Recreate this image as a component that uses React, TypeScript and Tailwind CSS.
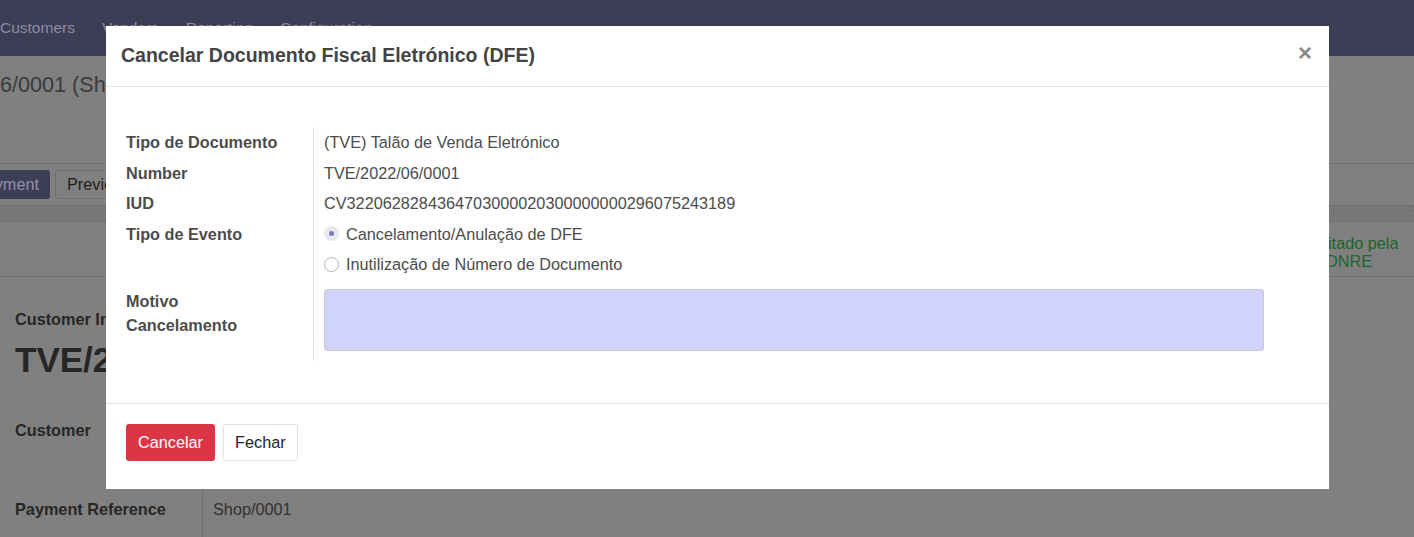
import { useState } from 'react'

const rows = [
  { label: 'Tipo de Documento', value: '(TVE) Talão de Venda Eletrónico' },
  { label: 'Number', value: 'TVE/2022/06/0001' },
  { label: 'IUD', value: 'CV3220628284364703000020300000000296075243189' },
]

const events = ['Cancelamento/Anulação de DFE', 'Inutilização de Número de Documento']

function Radio({ checked, label, onClick }: { checked: boolean; label: string; onClick: () => void }) {
  return (
    <label className="flex cursor-pointer items-center gap-[7px]" onClick={onClick}>
      {checked ? (
        <span className="flex h-[15px] w-[15px] items-center justify-center rounded-full bg-[#e8e8f0]">
          <span className="h-[5px] w-[5px] rounded-full bg-[#7c7bad]" />
        </span>
      ) : (
        <span className="h-[15px] w-[15px] rounded-full border border-[#adb5bd] bg-white" />
      )}
      <span>{label}</span>
    </label>
  )
}

function Backdrop() {
  return (
    <div className="flex flex-col">
      <nav className="flex h-[56px] items-center gap-[27px] bg-[#3e3d56] text-[15.5px] text-[#8d8ca1]">
        <span>Customers</span>
        <span>Vendors</span>
        <span>Reporting</span>
        <span>Configuration</span>
      </nav>
      <div className="h-[108px] border-b border-[#6e6e6e]">
        <div className="mt-[14px] text-[21.6px] leading-[30px] text-[#3a3a3a]">6/0001 (Shop/0001)</div>
      </div>
      <div className="flex h-[41px] gap-[5px] pt-[6px]">
        <span className="flex h-[29px] w-[50px] items-center justify-end rounded-r-[3px] bg-[#3e3d56] pr-[11px] text-[#9190a8]">yment</span>
        <span className="flex h-[29px] items-center rounded-[3px] border border-[#6e6e6e] px-[11px] text-[#1e1e1e]">Preview</span>
      </div>
      <div className="h-[17px] border-y border-[#6e6e6e] bg-[repeating-conic-gradient(#7a7a7a_0%_25%,#747474_0%_50%)] bg-[length:4px_4px]" />
      <div className="flex h-[55px] justify-end border-b border-[#6e6e6e]">
        <div className="mt-[12px] w-[114px] leading-[18px] text-[#1d6629]">
          <div>Aceitado pela</div>
          <div className="pl-[26px]">DNRE</div>
        </div>
      </div>
      <div className="flex flex-col pl-[15px] text-[#262626]">
        <div className="mt-[30px] font-bold leading-[24px]">Customer Invoice</div>
        <div className="mt-[9px] text-[35px] font-bold leading-[40px]">TVE/2022/06/0001</div>
        <div className="mt-[38px] font-bold leading-[24px]">Customer</div>
        <div className="mt-[48px] flex h-[60px]">
          <div className="w-[187px] pt-[7px] font-bold leading-[24px]">Payment Reference</div>
          <div className="border-l border-[#6e6e6e] pl-[10px] pt-[7px] leading-[24px] text-[#303030]">Shop/0001</div>
        </div>
      </div>
    </div>
  )
}

export default function App() {
  const [event, setEvent] = useState(0)
  const [reason, setReason] = useState('')

  return (
    <div className="relative h-[537px] w-[1414px] overflow-hidden bg-[#808080] font-['Liberation_Sans',Arial,sans-serif] text-[16.25px]">
      <Backdrop />

      <div className="absolute left-[106px] top-[26px] flex h-[463px] w-[1223px] flex-col bg-white text-[#4c4c4c]">
        <div className="flex h-[61px] shrink-0 items-center justify-between border-b border-[#dee2e6] pl-[15px] pr-[17px]">
          <h4 className="text-[19.5px] font-bold text-[#444]">Cancelar Documento Fiscal Eletrónico (DFE)</h4>
          <button className="mb-[6px] text-[24px] font-bold leading-none text-[#8a8a8a]">×</button>
        </div>

        <div className="flex flex-col px-[20px] pb-[42px] pt-[40px]">
          {rows.map((r) => (
            <div key={r.label} className="flex h-[30.5px]">
              <div className="flex w-[187px] items-center font-bold">{r.label}</div>
              <div className="flex items-center border-l border-[#dee2e6] pl-[10px]">{r.value}</div>
            </div>
          ))}
          <div className="flex">
            <div className="flex h-[30.5px] w-[187px] items-center font-bold">Tipo de Evento</div>
            <div className="flex flex-col border-l border-[#dee2e6] pl-[10px]">
              {events.map((e, i) => (
                <div key={e} className="flex h-[30.5px] items-center">
                  <Radio checked={event === i} label={e} onClick={() => setEvent(i)} />
                </div>
              ))}
            </div>
          </div>
          <div className="flex">
            <div className="w-[187px] pt-[9px] font-bold leading-[24px]">
              <div>Motivo</div>
              <div>Cancelamento</div>
            </div>
            <div className="border-l border-[#dee2e6] pb-[10px] pl-[10px] pt-[9px]">
              <textarea
                value={reason}
                onChange={(e) => setReason(e.target.value)}
                className="block h-[62px] w-[940px] resize-none rounded-[3px] border border-[#c9c9d6] bg-[#d2d3fd] outline-none"
              />
            </div>
          </div>
        </div>

        <div className="flex flex-1 items-start gap-[8px] border-t border-[#dee2e6] px-[20px] pt-[20px]">
          <button className="h-[37px] rounded-[3px] bg-[#dc3545] px-[12px] text-white">Cancelar</button>
          <button className="h-[37px] rounded-[3px] border border-[#dee2e6] bg-white px-[11px] text-[#212529]">Fechar</button>
        </div>
      </div>
    </div>
  )
}
